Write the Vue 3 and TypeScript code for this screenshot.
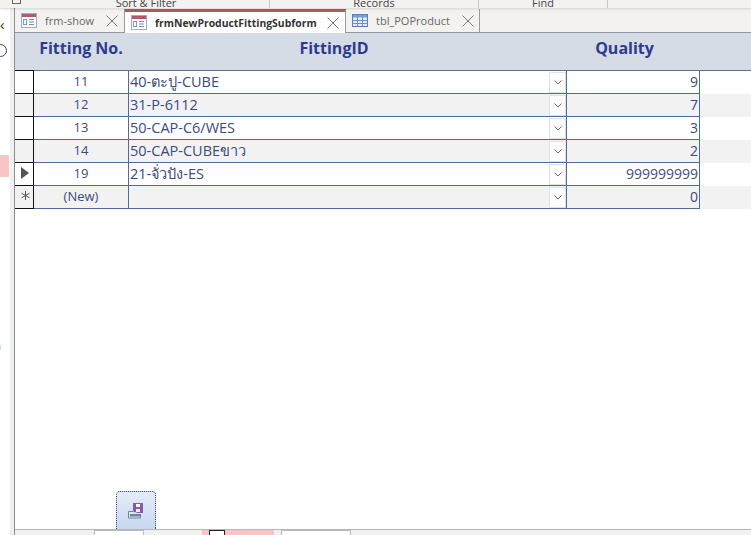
<script setup lang="ts">
interface FittingRow {
  no: string
  fitting: string
  qty: string
  marker?: 'current' | 'new'
}

const rows: FittingRow[] = [
  { no: '11', fitting: '40-ตะปู-CUBE', qty: '9' },
  { no: '12', fitting: '31-P-6112', qty: '7' },
  { no: '13', fitting: '50-CAP-C6/WES', qty: '3' },
  { no: '14', fitting: '50-CAP-CUBEขาว', qty: '2' },
  { no: '19', fitting: '21-จั่วปัง-ES', qty: '999999999', marker: 'current' },
  { no: '(New)', fitting: '', qty: '0', marker: 'new' },
]

const tabs = [
  { name: 'frm-show', icon: 'form', active: false },
  { name: 'frmNewProductFittingSubform', icon: 'form', active: true },
  { name: 'tbl_POProduct', icon: 'table', active: false },
]
</script>

<template>
  <div class="app">
    <div class="ribbon">
      <div class="group launcher"><span class="launch"></span></div>
      <div class="group sort"><span>Sort &amp; Filter</span></div>
      <div class="group records"><span>Records</span></div>
      <div class="group find"><span>Find</span></div>
    </div>

    <div class="main">
      <div class="nav">
        <span class="chevron">‹</span>
        <span class="search"></span>
        <span class="pink"></span>
        <span class="tick"></span>
      </div>
      <div class="gutter"></div>

      <div class="doc">
        <div class="tabs">
          <div v-for="tab in tabs" :key="tab.name" class="tab" :class="{ active: tab.active }">
            <svg v-if="tab.icon === 'form'" class="tab-icon" width="16" height="15" viewBox="0 0 16 15">
              <rect x="0.5" y="0.5" width="15" height="14" fill="#fff" stroke="#a3adbd" />
              <rect x="1" y="1" width="14" height="3" fill="#b5566c" />
              <rect x="2.5" y="6.5" width="3" height="5" fill="none" stroke="#6f9cc0" />
              <path d="M8 6.5h5M8 9h5M8 11.5h5" stroke="#6f8fb5" />
            </svg>
            <svg v-else class="tab-icon" width="16" height="13" viewBox="0 0 16 13">
              <rect x="0.5" y="0.5" width="15" height="12" fill="#e3edf8" stroke="#5b7fb5" />
              <rect x="1" y="1" width="14" height="2.5" fill="#7e9fcf" />
              <path d="M0.5 6.5h15M0.5 9.5h15M5.5 0.5v12M10.5 0.5v12" stroke="#6c8fc0" />
            </svg>
            <span class="tab-name">{{ tab.name }}</span>
            <svg class="tab-close" width="12" height="12" viewBox="0 0 12 12">
              <path d="M0.5 0.5l11 11M11.5 0.5l-11 11" stroke="#7a7a7a" fill="none" />
            </svg>
          </div>
          <div class="tab-rest"></div>
        </div>

        <div class="form-head">
          <div class="h-sel"></div>
          <div class="h-no">Fitting No.</div>
          <div class="h-fit">FittingID</div>
          <div class="h-qty">Quality</div>
        </div>

        <div class="list">
          <div v-for="(row, i) in rows" :key="row.no" class="row" :class="{ alt: i % 2 === 1 }">
            <div class="sel">
              <svg v-if="row.marker === 'current'" class="marker" width="8" height="12" viewBox="0 0 8 12">
                <path d="M0 0l8 6-8 6z" fill="#555" />
              </svg>
              <svg v-else-if="row.marker === 'new'" class="marker" width="9" height="9" viewBox="0 0 9 9">
                <path d="M4.5 0v9M0.5 2.2l8 4.6M8.5 2.2l-8 4.6" stroke="#555" fill="none" />
              </svg>
            </div>
            <div class="no">{{ row.no }}</div>
            <div class="fit">
              <span class="fit-text">{{ row.fitting }}</span>
              <span class="drop">
                <svg width="8" height="5" viewBox="0 0 8 5">
                  <path d="M0.5 0.5l3.5 3.5 3.5-3.5" stroke="#6a6a6a" fill="none" />
                </svg>
              </span>
            </div>
            <div class="qty">{{ row.qty }}</div>
          </div>
        </div>

        <div class="form-foot">
          <button class="save" type="button">
            <svg width="22" height="22" viewBox="0 0 22 22">
              <rect x="8" y="5" width="10" height="10" fill="#8a5aa8" />
              <rect x="11" y="6" width="4" height="3" fill="#fff" />
              <rect x="11" y="11" width="4" height="3" fill="#f1e9f5" />
              <path d="M8 13.5H3.5v6.5H15.5v-4" fill="#dfe7ee" stroke="#6f8594" />
              <rect x="5" y="16" width="10" height="2.5" fill="#6f8594" />
            </svg>
          </button>
        </div>

        <div class="status">
          <span class="box first"></span>
          <span class="box pinkbox"><span class="check"></span></span>
          <span class="box last"></span>
        </div>
      </div>
    </div>
  </div>
</template>

<style scoped>
.app {
  width: 751px;
  height: 535px;
  display: flex;
  flex-direction: column;
  overflow: hidden;
  background: #fff;
  font-family: "Open Sans", "Noto Sans", "DejaVu Sans", sans-serif;
}

.ribbon {
  flex: 0 0 8px;
  display: grid;
  grid-template-columns: 21px 249px 209px 129px 1fr;
  overflow: hidden;
  background: #f3f2f1;
  box-shadow: 0 1px 2px rgba(0, 0, 0, 0.18);
  position: relative;
  font-size: 11px;
  color: #444;
}

.group {
  display: flex;
  justify-content: center;
  align-items: flex-end;
  border-right: 1px solid #c8c6c4;
  line-height: 11px;
  height: 8px;
}

.launcher {
  justify-content: flex-start;
  align-items: flex-start;
  border-right: 0;
}

.launch {
  width: 8px;
  height: 3px;
  margin-left: 12px;
  border: 1px solid #666;
  border-top: 0;
}

.sort span {
  margin-left: 2px;
}

.main {
  flex: 1;
  display: flex;
  min-height: 0;
}

.nav {
  flex: 0 0 10px;
  display: flex;
  flex-direction: column;
  background: #fff;
}

.chevron {
  margin-top: 9px;
  height: 14px;
  font-size: 15px;
  line-height: 14px;
  color: #333;
}

.search {
  margin-top: 13px;
  margin-left: -6px;
  width: 13px;
  height: 13px;
  box-sizing: border-box;
  border: 1px solid #444;
  border-radius: 50%;
}

.pink {
  margin-top: 98px;
  height: 22px;
  width: 9px;
  background: #fbc4c4;
}

.tick {
  margin-top: 168px;
  height: 5px;
  width: 1px;
  background: #bfe6ea;
}

.gutter {
  flex: 0 0 4px;
  background: #f0f0f0;
  border-right: 1px solid #8e8e92;
}

.doc {
  flex: 1;
  min-width: 0;
  display: flex;
  flex-direction: column;
}

.tabs {
  flex: 0 0 24px;
  display: flex;
  background: #f3f2f1;
  box-sizing: border-box;
  margin-top: 1px;
}

.tab {
  display: flex;
  align-items: center;
  box-sizing: border-box;
  height: 24px;
  padding: 0 5px 0 6px;
  background: #f3f2f1;
  border-right: 1px solid #9a9a9a;
  border-bottom: 1px solid #8e99a8;
  color: #666;
  font-size: 11px;
}

.tab:nth-child(1) {
  width: 110px;
  padding-right: 6px;
}

.tab:nth-child(2) {
  width: 221px;
  padding-right: 6px;
  border-top: 3px solid #b2595f;
  border-bottom: 0;
  background: #fff;
  color: #333;
  font-size: 10.4px;
  font-weight: 700;
}

.tab:nth-child(3) {
  width: 134px;
  padding-right: 5px;
}

.tab-name {
  margin-left: 8px;
  flex: 1;
  white-space: nowrap;
}

.tab-rest {
  flex: 1;
  border-bottom: 1px solid #8e99a8;
}

.form-head {
  flex: 0 0 37px;
  display: grid;
  grid-template-columns: 19px 94px 412px 1fr;
  align-items: center;
  background: #d5dce6;
  color: #2f3a8c;
  font-size: 16px;
  font-weight: 700;
  text-align: center;
  border-bottom: 1px solid #5b7490;
}

.h-sel {
  align-self: end;
  height: 1px;
  margin-bottom: -1px;
  background: #111;
}

.h-no,
.h-fit,
.h-qty {
  margin-top: -8px;
}

.h-qty {
  width: 117px;
  margin-left: 26px;
}

.row {
  height: 23px;
  display: grid;
  grid-template-columns: 19px 95px 438px 133px;
  background: #fff;
}

.row.alt {
  background: #f2f2f2;
}

.sel {
  display: flex;
  align-items: center;
  justify-content: center;
  border-right: 1px solid #111;
  border-bottom: 1px solid #111;
  box-sizing: border-box;
}

.marker {
  margin-left: 2px;
  margin-bottom: 3px;
}

.no {
  border-right: 1px solid #4f6b9a;
  border-bottom: 1px solid #4f6b9a;
  box-sizing: border-box;
  text-align: center;
  font-size: 13px;
  line-height: 20px;
  color: #3c4a80;
}

.fit {
  display: flex;
  justify-content: space-between;
  border-right: 1px solid #4f6b9a;
  border-bottom: 1px solid #4f6b9a;
  box-sizing: border-box;
  font-size: 14.5px;
  line-height: 21px;
  color: #3c4a80;
  padding-left: 1px;
}

.drop {
  width: 17px;
  height: 21px;
  margin-top: 1px;
  box-sizing: border-box;
  border: 1px solid #dfe3e8;
  background: #fdfdfd;
  display: flex;
  align-items: center;
  justify-content: center;
}

.qty {
  border-right: 1px solid #4f6b9a;
  border-bottom: 1px solid #4f6b9a;
  box-sizing: border-box;
  text-align: right;
  font-size: 14px;
  line-height: 22px;
  color: #3c4a80;
  padding-right: 1px;
}

.form-foot {
  flex: 1;
  display: flex;
  align-items: flex-end;
  padding-left: 101px;
  min-height: 0;
}

.save {
  width: 40px;
  height: 38px;
  padding: 0 0 4px;
  display: flex;
  align-items: center;
  justify-content: center;
  background: linear-gradient(#e4ecf8, #c8d8f0);
  border: 1px dotted #3a4c68;
  border-bottom: 0;
  border-radius: 4px 4px 0 0;
}

.status {
  flex: 0 0 6px;
  display: flex;
  align-items: flex-start;
  background: #f0f0f0;
  border-top: 1px solid #b5b5b5;
  box-sizing: border-box;
  overflow: hidden;
}

.box {
  height: 8px;
  box-sizing: border-box;
  display: block;
  background: #fff;
  border: 1px solid #bbb;
}

.first {
  margin-left: 79px;
  width: 50px;
}

.pinkbox {
  margin-left: 58px;
  width: 72px;
  background: #fbc4c4;
  border: 0;
  padding-left: 7px;
}

.check {
  display: block;
  width: 16px;
  height: 8px;
  background: #fff;
  border: 1px solid #222;
  box-sizing: border-box;
}

.last {
  margin-left: 7px;
  width: 70px;
}
</style>

<style>
body {
  margin: 0;
}
</style>
